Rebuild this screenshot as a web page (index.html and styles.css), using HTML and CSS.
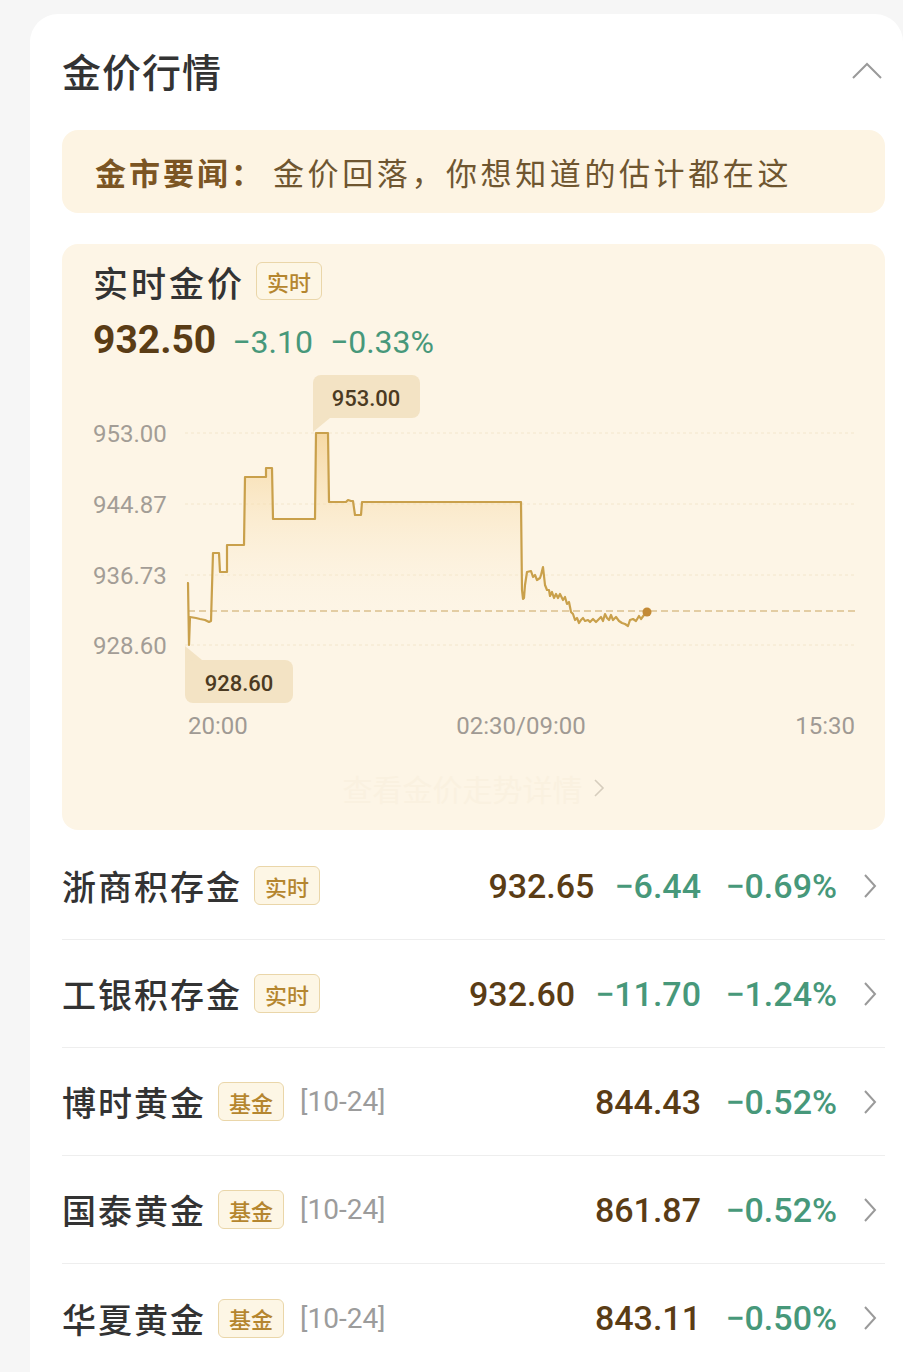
FILE: index.html
```html
<!DOCTYPE html>
<html lang="zh-CN">
<head>
    <meta charset="UTF-8">
    <meta name="viewport" content="width=device-width, initial-scale=1.0">
    <title>金价行情</title>
    <link rel="stylesheet" href="styles.css">
</head>
<body>
    <div class="page">
        <section class="market-card">
            <header class="card-head">
                <h2 class="card-title">金价行情</h2>
                <svg class="collapse-icon" width="32" height="20" viewBox="0 0 32 20">
                    <polyline points="2,18 16,4 30,18" fill="none" stroke="#9a9a9a" stroke-width="2"/>
                </svg>
            </header>

            <a class="news-bar" href="#">
                <span class="news-label">金市要闻：</span>
                <span class="news-text">金价回落，你想知道的估计都在这</span>
            </a>

            <div class="chart-card">
                <div class="chart-head">
                    <div class="chart-title-row">
                        <span class="chart-title">实时金价</span>
                        <span class="tag tag-lg">实时</span>
                    </div>
                    <div class="quote">
                        <span class="quote-price">932.50</span>
                        <span class="quote-change">−3.10</span>
                        <span class="quote-change">−0.33%</span>
                    </div>
                </div>

                <!-- viewBox uses page coordinates so points read straight off the picture -->
                <svg class="chart" width="823" height="380" viewBox="62 365 823 380">
                    <defs>
                        <linearGradient id="areaFill" gradientUnits="userSpaceOnUse" x1="0" y1="432" x2="0" y2="630">
                            <stop offset="0" stop-color="#f4cf8c" stop-opacity="0.75"/>
                            <stop offset="1" stop-color="#fdf5e6" stop-opacity="0"/>
                        </linearGradient>
                    </defs>

                    <g class="grid">
                        <line x1="185" y1="433" x2="855" y2="433"/>
                        <line x1="185" y1="504" x2="855" y2="504"/>
                        <line x1="185" y1="575" x2="855" y2="575"/>
                        <line x1="185" y1="645" x2="855" y2="645"/>
                    </g>

                    <g class="axis-y">
                        <text x="93" y="442">953.00</text>
                        <text x="93" y="513">944.87</text>
                        <text x="93" y="584">936.73</text>
                        <text x="93" y="654">928.60</text>
                    </g>

                    <path class="area" d="M187,583 L188,583 L189,645 L190,617 L196,618 L200,619 L205,620 L209,622 L211,621 L213,553 L219,553 L220,572 L227,572 L227,545 L244,545 L245,477 L266,477 L266,468 L272,468 L273,519 L315,519 L316,433 L328,433 L329,502 L346,502 L348,500 L351,501 L353,501 L355,515 L361,515 L362,502 L521,502 L522,590 L523,599 L524,598 L525,585 L527,572 L531,571 L533,577 L535,575 L537,580 L540,578 L541,575 L543,567 L545,585 L547,590 L549,590 L550,596 L552,592 L554,598 L556,594 L558,598 L560,594 L563,600 L565,597 L567,604 L569,602 L571,612 L573,614 L575,620 L577,618 L579,623 L581,620 L583,618 L585,621 L588,620 L590,622 L593,619 L596,622 L598,620 L601,617 L603,621 L605,614 L607,618 L609,620 L611,615 L613,620 L616,617 L619,621 L622,623 L625,624 L628,626 L630,620 L633,619 L636,621 L639,616 L641,619 L644,615 L647,612 L647,645 L187,645 Z"/>

                    <line class="base-line" x1="188" y1="611" x2="855" y2="611"/>

                    <path class="line" d="M187,583 L188,583 L189,645 L190,617 L196,618 L200,619 L205,620 L209,622 L211,621 L213,553 L219,553 L220,572 L227,572 L227,545 L244,545 L245,477 L266,477 L266,468 L272,468 L273,519 L315,519 L316,433 L328,433 L329,502 L346,502 L348,500 L351,501 L353,501 L355,515 L361,515 L362,502 L521,502 L522,590 L523,599 L524,598 L525,585 L527,572 L531,571 L533,577 L535,575 L537,580 L540,578 L541,575 L543,567 L545,585 L547,590 L549,590 L550,596 L552,592 L554,598 L556,594 L558,598 L560,594 L563,600 L565,597 L567,604 L569,602 L571,612 L573,614 L575,620 L577,618 L579,623 L581,620 L583,618 L585,621 L588,620 L590,622 L593,619 L596,622 L598,620 L601,617 L603,621 L605,614 L607,618 L609,620 L611,615 L613,620 L616,617 L619,621 L622,623 L625,624 L628,626 L630,620 L633,619 L636,621 L639,616 L641,619 L644,615 L647,612"/>
                    <circle class="last-dot" cx="647" cy="612" r="4.5"/>

                    <g class="tip">
                        <path d="M313,408 L313,432 L330,418 Z"/>
                        <rect x="313" y="375" width="107" height="43" rx="8"/>
                        <text x="366" y="406">953.00</text>
                    </g>
                    <g class="tip">
                        <path d="M185,670 L185,646 L202,660 Z"/>
                        <rect x="185" y="660" width="108" height="43" rx="8"/>
                        <text x="239" y="691">928.60</text>
                    </g>

                    <g class="axis-x">
                        <text x="188" y="734">20:00</text>
                        <text x="521" y="734" text-anchor="middle">02:30/09:00</text>
                        <text x="855" y="734" text-anchor="end">15:30</text>
                    </g>
                </svg>

                <a class="chart-more" href="#">
                    <span>查看金价走势详情</span>
                    <svg width="12" height="20" viewBox="0 0 12 20">
                        <polyline points="2,2 10,10 2,18" fill="none" stroke="#d6cdbd" stroke-width="1.6"/>
                    </svg>
                </a>
            </div>

            <ul class="price-list">
                <li class="price-row">
                    <span class="row-name">浙商积存金</span>
                    <span class="tag">实时</span>
                    <span class="row-values">
                        <span class="row-price">932.65</span>
                        <span class="row-change">−6.44</span>
                        <span class="row-pct">−0.69%</span>
                    </span>
                    <svg class="row-arrow" width="14" height="26" viewBox="0 0 14 26">
                        <polyline points="2,2 12,13 2,24" fill="none" stroke="#9a9a9a" stroke-width="2"/>
                    </svg>
                </li>
                <li class="price-row">
                    <span class="row-name">工银积存金</span>
                    <span class="tag">实时</span>
                    <span class="row-values">
                        <span class="row-price">932.60</span>
                        <span class="row-change">−11.70</span>
                        <span class="row-pct">−1.24%</span>
                    </span>
                    <svg class="row-arrow" width="14" height="26" viewBox="0 0 14 26">
                        <polyline points="2,2 12,13 2,24" fill="none" stroke="#9a9a9a" stroke-width="2"/>
                    </svg>
                </li>
                <li class="price-row">
                    <span class="row-name">博时黄金</span>
                    <span class="tag">基金</span>
                    <span class="row-date">[10-24]</span>
                    <span class="row-values">
                        <span class="row-price">844.43</span>
                        <span class="row-pct">−0.52%</span>
                    </span>
                    <svg class="row-arrow" width="14" height="26" viewBox="0 0 14 26">
                        <polyline points="2,2 12,13 2,24" fill="none" stroke="#9a9a9a" stroke-width="2"/>
                    </svg>
                </li>
                <li class="price-row">
                    <span class="row-name">国泰黄金</span>
                    <span class="tag">基金</span>
                    <span class="row-date">[10-24]</span>
                    <span class="row-values">
                        <span class="row-price">861.87</span>
                        <span class="row-pct">−0.52%</span>
                    </span>
                    <svg class="row-arrow" width="14" height="26" viewBox="0 0 14 26">
                        <polyline points="2,2 12,13 2,24" fill="none" stroke="#9a9a9a" stroke-width="2"/>
                    </svg>
                </li>
                <li class="price-row">
                    <span class="row-name">华夏黄金</span>
                    <span class="tag">基金</span>
                    <span class="row-date">[10-24]</span>
                    <span class="row-values">
                        <span class="row-price">843.11</span>
                        <span class="row-pct">−0.50%</span>
                    </span>
                    <svg class="row-arrow" width="14" height="26" viewBox="0 0 14 26">
                        <polyline points="2,2 12,13 2,24" fill="none" stroke="#9a9a9a" stroke-width="2"/>
                    </svg>
                </li>
            </ul>
        </section>
    </div>
</body>
</html>
```

FILE: styles.css
```css
body {
    margin: 0;
    background-color: #f6f6f6;
    font-family: "Noto Sans CJK SC", sans-serif;
    color: #333;
}
.page {
    padding: 14px 0 0 30px;
    overflow: hidden;
}
.market-card {
    background-color: #fff;
    border-radius: 28px;
    padding: 0 18px 40px 32px;
}
.card-head {
    height: 112px;
    display: flex;
    align-items: center;
    justify-content: space-between;
}
.card-title {
    margin: 0;
    font-size: 39px;
    font-weight: 500;
    line-height: 1;
    letter-spacing: 1px;
    color: #333;
}
.collapse-icon {
    margin-right: 2px;
}
.news-bar {
    margin-top: 4px;
    height: 83px;
    display: flex;
    align-items: center;
    padding: 0 33px;
    background-color: #fdf4e3;
    border-radius: 16px;
    text-decoration: none;
    font-size: 31px;
    letter-spacing: 3.6px;
}
.news-label {
    font-weight: 700;
    color: #7b5523;
    letter-spacing: 3px;
    margin-right: 8px;
}
.news-text {
    color: #6f5630;
}
.chart-card {
    margin-top: 31px;
    background-color: #fdf5e6;
    border-radius: 16px;
    padding-top: 15px;
    height: 586px;
    box-sizing: border-box;
}
.chart-head {
    padding-left: 31px;
}
.chart-title-row {
    display: flex;
    align-items: center;
    height: 44px;
}
.chart-title {
    font-size: 35px;
    font-weight: 500;
    letter-spacing: 3px;
    color: #333;
}
.tag {
    display: inline-flex;
    align-items: center;
    height: 39px;
    box-sizing: border-box;
    padding: 0 10px;
    margin-left: 12px;
    border: 1px solid #ead6a9;
    border-radius: 6px;
    background-color: #fdf6e5;
    color: #b5862f;
    font-size: 22px;
    font-weight: 500;
    flex-shrink: 0;
}
.tag-lg {
    margin-left: 11px;
    height: 38px;
}
.quote {
    margin-top: 14px;
    height: 46px;
    display: flex;
    align-items: baseline;
    font-family: Roboto, "Noto Sans CJK SC", sans-serif;
}
.quote-price {
    font-size: 39px;
    font-weight: 700;
    color: #5a3c15;
    margin-right: 16px;
}
.quote-change {
    font-size: 32px;
    color: #47987a;
    margin-right: 17px;
}
.chart {
    display: block;
    margin-top: 2px;
}
.chart text {
    font-family: Roboto, sans-serif;
}
.grid line {
    stroke: #f3e6cc;
    stroke-width: 1;
    stroke-dasharray: 3 3;
}
.axis-y text {
    font-size: 24px;
    fill: #a39d96;
}
.axis-x text {
    font-size: 24px;
    fill: #a09a94;
}
.area {
    fill: url(#areaFill);
}
.line {
    fill: none;
    stroke: #c9a04b;
    stroke-width: 2.2;
    stroke-linejoin: round;
}
.base-line {
    stroke: #c9a560;
    stroke-width: 1;
    stroke-dasharray: 7 4;
}
.last-dot {
    fill: #c38a35;
}
.tip path,
.tip rect {
    fill: #f3e3c4;
}
.tip text {
    font-size: 22px;
    font-weight: 500;
    fill: #4b3a22;
    text-anchor: middle;
}
.chart-more {
    height: 85px;
    display: flex;
    align-items: center;
    justify-content: center;
    gap: 10px;
    text-decoration: none;
    font-size: 30px;
    color: #faf1e0;
}
.price-list {
    list-style: none;
    margin: 2px 0 0;
    padding: 0;
}
.price-row {
    height: 108px;
    box-sizing: border-box;
    display: flex;
    align-items: center;
    border-bottom: 1px solid #eeeeee;
    padding-right: 8px;
}
.price-row:last-child {
    border-bottom: none;
}
.row-name {
    font-size: 34px;
    font-weight: 500;
    letter-spacing: 2px;
    color: #333;
}
.row-date {
    margin-left: 16px;
    font-family: Roboto, sans-serif;
    font-size: 28px;
    color: #9c9c9c;
}
.row-values {
    margin-left: auto;
    display: flex;
    align-items: baseline;
    gap: 20px;
    font-family: Roboto, sans-serif;
    font-size: 34px;
    font-weight: 500;
}
.row-price {
    color: #5a3c15;
}
.row-change,
.row-pct {
    color: #47987a;
}
.row-pct {
    min-width: 116px;
    text-align: right;
}
.row-arrow {
    margin-left: 26px;
    flex-shrink: 0;
}
```
